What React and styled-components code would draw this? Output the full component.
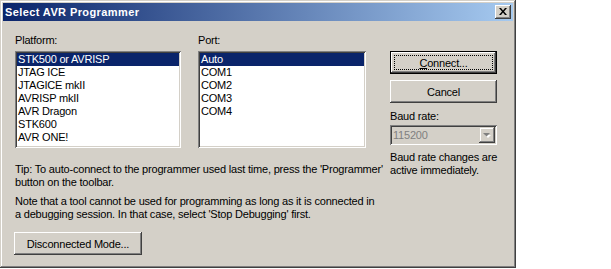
import React from "react";
import styled, { createGlobalStyle, css } from "styled-components";

const Global = createGlobalStyle`
  html, body { margin: 0; padding: 0; background: #ffffff; }
  body { font-family: "Liberation Sans", Arial, sans-serif; font-size: 11px; color: #000; letter-spacing: -0.2px; }
`;

const face = "#D4D0C8";

const Window = styled.div`
  box-sizing: border-box;
  width: 516px;
  height: 268px;
  padding: 3px;
  background: ${face};
  box-shadow: inset -1px -1px #404040, inset 1px 1px ${face},
    inset -2px -2px #808080, inset 2px 2px #ffffff;
  display: flex;
  flex-direction: column;
`;

const TitleBar = styled.div`
  height: 18px;
  display: flex;
  align-items: center;
  justify-content: space-between;
  padding: 0 2px 0 2px;
  background: linear-gradient(to right, #0a246a, #a6caf0);
`;

const Title = styled.span`
  color: #fff;
  font-weight: bold;
  font-size: 11px;
  font-family: "Liberation Sans", Arial, sans-serif;
  letter-spacing: 0.4px;
`;

const CloseBtn = styled.div`
  width: 16px;
  height: 14px;
  box-sizing: border-box;
  background: ${face};
  box-shadow: inset -1px -1px #404040, inset 1px 1px #ffffff,
    inset -2px -2px #808080, inset 2px 2px ${face};
  display: flex;
  align-items: center;
  justify-content: center;
  padding-bottom: 1px;
`;

const Body = styled.div`
  flex: 1;
  display: flex;
  gap: 8px;
  padding: 13px 0 0 12px;
`;

const LeftCol = styled.div`
  width: 367px;
  display: flex;
  flex-direction: column;
`;

const RightCol = styled.div`
  width: 107px;
  display: flex;
  flex-direction: column;
  padding-top: 17px;
`;

const ListsRow = styled.div`
  display: flex;
  gap: 17px;
`;

const Group = styled.div`
  width: ${(p) => p.$w}px;
  display: flex;
  flex-direction: column;
`;

const Label = styled.div`
  line-height: 13px;
  height: 13px;
  margin-bottom: ${(p) => p.$mb ?? 4}px;
  margin-top: ${(p) => p.$mt ?? 0}px;
  white-space: nowrap;
`;

const ListBox = styled.div`
  box-sizing: border-box;
  height: 97px;
  padding: 2px;
  background: #fff;
  box-shadow: inset 1px 1px #808080, inset -1px -1px #ffffff,
    inset 2px 2px #404040, inset -2px -2px ${face};
`;

const Item = styled.div`
  height: 13px;
  line-height: 13px;
  padding-left: 1px;
  white-space: nowrap;
  ${(p) =>
    p.$sel &&
    css`
      background: #0a246a;
      color: #fff;
    `}
`;

const Para = styled.div`
  margin-top: ${(p) => p.$mt}px;
  line-height: 13px;
  white-space: nowrap;
`;

const Button = styled.div`
  box-sizing: border-box;
  width: ${(p) => p.$w}px;
  height: 23px;
  margin-top: ${(p) => p.$mt ?? 0}px;
  margin-left: ${(p) => p.$ml ?? 0}px;
  background: ${face};
  display: flex;
  align-items: center;
  justify-content: center;
  position: relative;
  box-shadow: inset -1px -1px #404040, inset 1px 1px #ffffff,
    inset -2px -2px #808080, inset 2px 2px ${face};
  ${(p) =>
    p.$default &&
    css`
      border: 1px solid #000;
      &::after {
        content: "";
        position: absolute;
        inset: 3px;
        border: 1px dotted #000;
      }
    `}
`;

const U = styled.span`
  text-decoration: underline;
`;

const Combo = styled.div`
  box-sizing: border-box;
  height: 20px;
  margin-top: 1px;
  padding: 2px;
  background: ${face};
  display: flex;
  align-items: stretch;
  box-shadow: inset 1px 1px #808080, inset -1px -1px #ffffff,
    inset 2px 2px #404040, inset -2px -2px ${face};
`;

const ComboText = styled.div`
  flex: 1;
  color: #808080;
  line-height: 16px;
  padding-left: 1px;
`;

const ComboArrow = styled.div`
  width: 16px;
  box-sizing: border-box;
  background: ${face};
  box-shadow: inset -1px -1px #404040, inset 1px 1px ${face},
    inset -2px -2px #808080, inset 2px 2px #ffffff;
  display: flex;
  align-items: center;
  justify-content: center;
`;

export default function App() {
  const platforms = [
    "STK500 or AVRISP",
    "JTAG ICE",
    "JTAGICE mkII",
    "AVRISP mkII",
    "AVR Dragon",
    "STK600",
    "AVR ONE!",
  ];
  const ports = ["Auto", "COM1", "COM2", "COM3", "COM4"];
  return (
    <>
      <Global />
      <Window>
        <TitleBar>
          <Title>Select AVR Programmer</Title>
          <CloseBtn>
            <svg width="8" height="7" viewBox="0 0 8 7">
              <path d="M0 0h2l2 2.5L6 0h2L5 3.5 8 7H6L4 4.5 2 7H0l3-3.5z" fill="#000" />
            </svg>
          </CloseBtn>
        </TitleBar>
        <Body>
          <LeftCol>
            <ListsRow>
              <Group $w={166}>
                <Label>Platform:</Label>
                <ListBox>
                  {platforms.map((p, i) => (
                    <Item key={p} $sel={i === 0}>
                      {p}
                    </Item>
                  ))}
                </ListBox>
              </Group>
              <Group $w={168}>
                <Label>Port:</Label>
                <ListBox>
                  {ports.map((p, i) => (
                    <Item key={p} $sel={i === 0}>
                      {p}
                    </Item>
                  ))}
                </ListBox>
              </Group>
            </ListsRow>
            <Para $mt={15}>
              Tip: To auto-connect to the programmer used last time, press the 'Programmer'
              <br />
              button on the toolbar.
            </Para>
            <Para $mt={6}>
              Note that a tool cannot be used for programming as long as it is connected in
              <br />
              a debugging session. In that case, select 'Stop Debugging' first.
            </Para>
            <Button $w={128} $mt={11} $ml={-1}>
              Disconnected Mode...
            </Button>
          </LeftCol>
          <RightCol>
            <Button $w={107} $default>
              <span>
                <U>C</U>onnect...
              </span>
            </Button>
            <Button $w={107} $mt={6}>
              Cancel
            </Button>
            <Label $mt={7} $mb={1}>
              Baud rate:
            </Label>
            <Combo>
              <ComboText>115200</ComboText>
              <ComboArrow>
                <svg width="8" height="5" viewBox="0 0 8 5">
                  <path d="M1 1h6L4 4z" fill="#ffffff" transform="translate(1 1)" />
                  <path d="M0 0h7L3.5 3.5z" fill="#808080" />
                </svg>
              </ComboArrow>
            </Combo>
            <Para $mt={6}>
              Baud rate changes are
              <br />
              active immediately.
            </Para>
          </RightCol>
        </Body>
      </Window>
    </>
  );
}
